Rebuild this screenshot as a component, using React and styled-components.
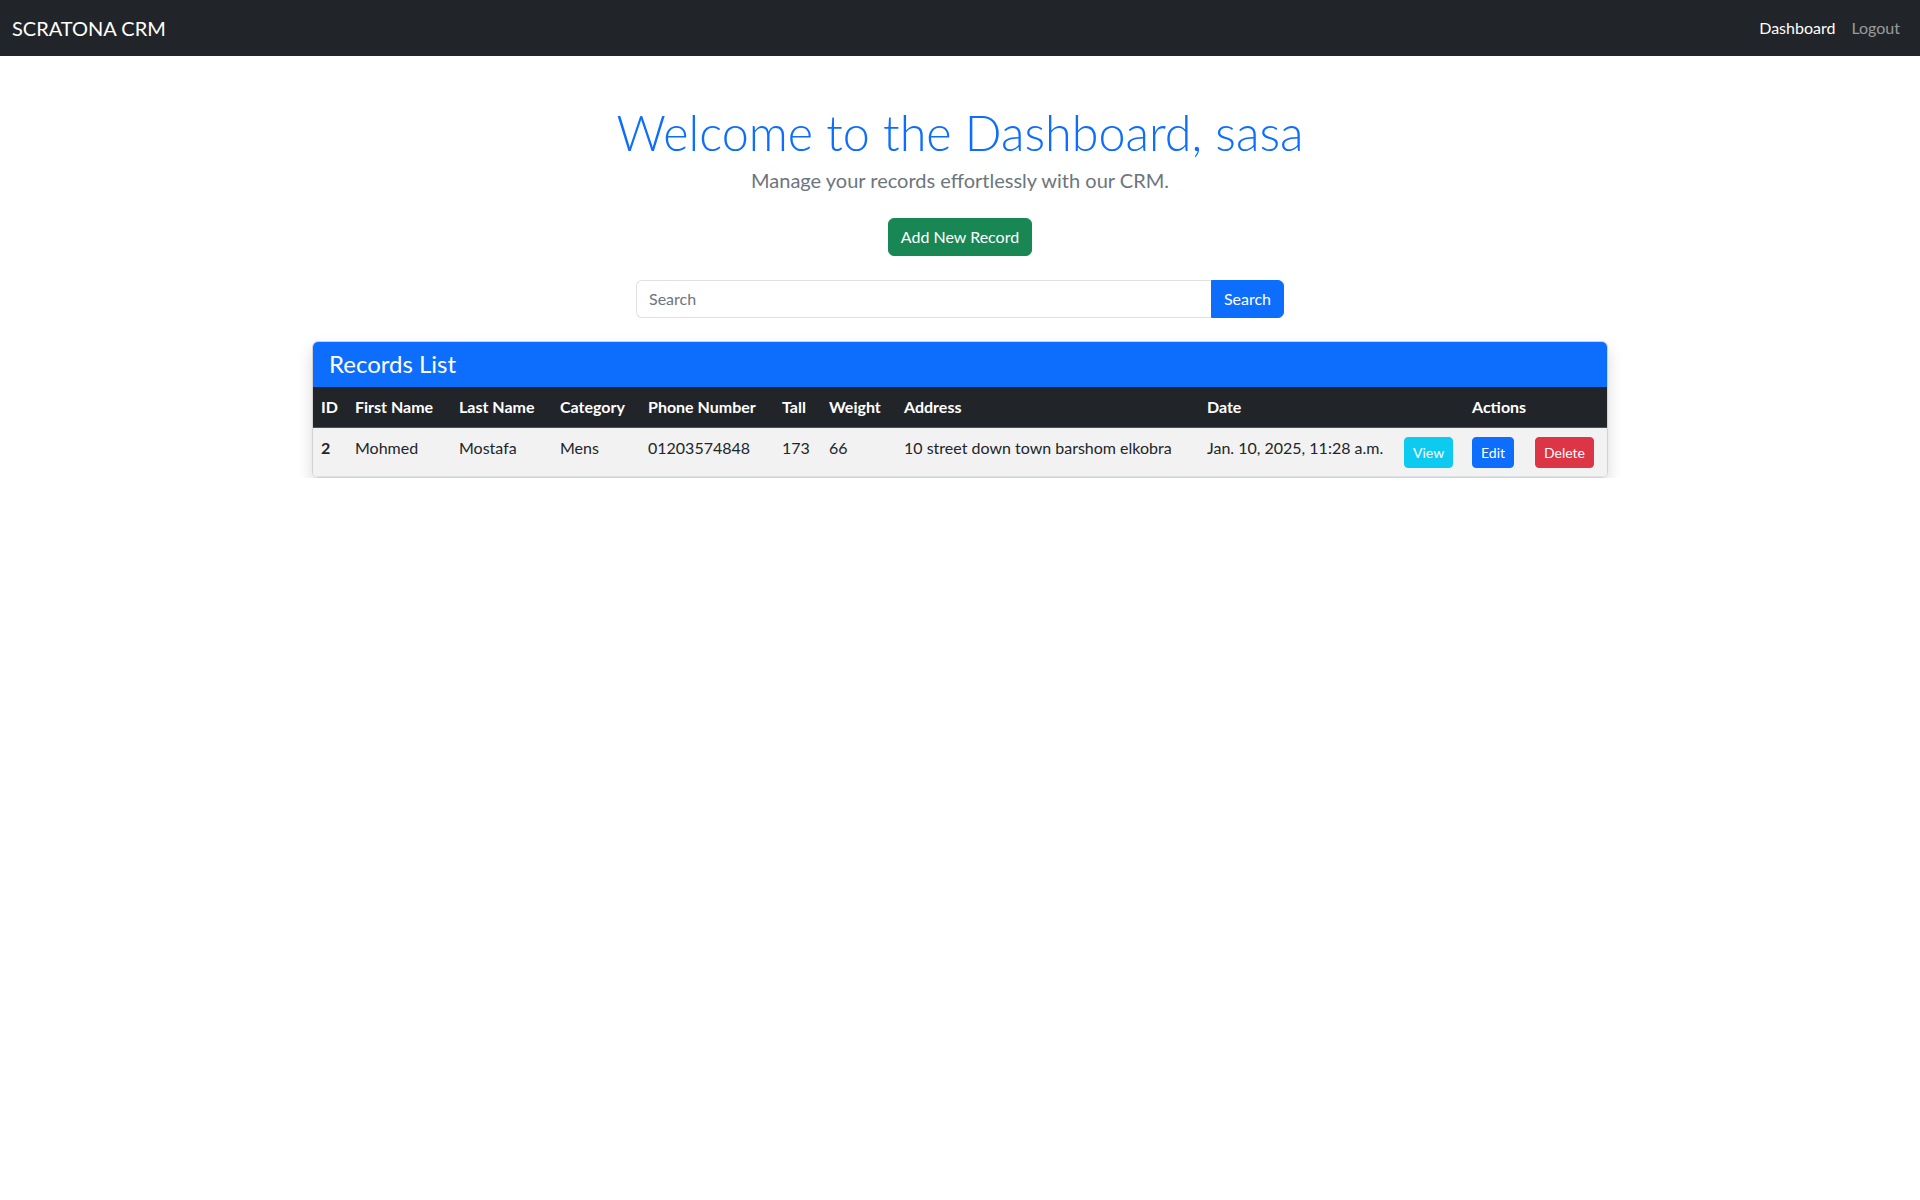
import React from "react";
import styled, { createGlobalStyle } from "styled-components";

const GlobalStyle = createGlobalStyle`
  * {
    box-sizing: border-box;
  }

  body {
    margin: 0;
    font-family: "Lato", "Open Sans", sans-serif;
    font-size: 16px;
    line-height: 1.5;
    color: #212529;
    background: #fff;
  }
`;

const colors = {
  primary: "#0d6efd",
  success: "#198754",
  info: "#0dcaf0",
  danger: "#dc3545",
  dark: "#212529",
  muted: "#6c757d",
};

// Navbar
const Navbar = styled.nav`
  display: flex;
  align-items: center;
  justify-content: space-between;
  height: 56px;
  padding: 8px 12px;
  background: ${colors.dark};
`;

const Brand = styled.a`
  font-size: 20px;
  line-height: 30px;
  padding: 5px 0;
  color: #fff;
  text-decoration: none;
`;

const NavList = styled.div`
  display: flex;
  align-items: center;
`;

const NavLink = styled.a`
  padding: 8px;
  font-size: 16px;
  color: ${(props) => (props.active ? "#fff" : "rgba(255, 255, 255, 0.55)")};
  text-decoration: none;
`;

// Page content
const Container = styled.main`
  max-width: 1320px;
  margin: 47px auto 0;
  padding: 0 12px;
  text-align: center;
`;

const Title = styled.h1`
  margin: 0 0 4px;
  font-size: 48.5px;
  font-weight: 300;
  line-height: 1.2;
  color: ${colors.primary};
`;

const Lead = styled.p`
  margin: 0 0 23px;
  font-size: 20px;
  font-weight: 400;
  color: ${colors.muted};
`;

const Button = styled.button`
  display: inline-block;
  vertical-align: ${(props) => (props.small ? "top" : "baseline")};
  margin-top: ${(props) => (props.small ? "1px" : "0")};
  font-family: inherit;
  font-size: ${(props) => (props.small ? "14px" : "16px")};
  line-height: 1.5;
  padding: ${(props) => (props.small ? "4px 8px" : "6px 12px")};
  border: 1px solid ${(props) => props.color};
  border-radius: ${(props) => (props.small ? "4px" : "6px")};
  background: ${(props) => props.color};
  color: #fff;
  cursor: pointer;
`;

const AddButton = styled(Button)`
  margin-bottom: 24px;
`;

const SearchForm = styled.form`
  display: flex;
  width: 648px;
  margin: 0 auto 23px;
`;

const SearchInput = styled.input`
  flex: 1;
  min-width: 0;
  font-family: inherit;
  font-size: 16px;
  line-height: 1.5;
  padding: 6px 12px;
  color: ${colors.dark};
  border: 1px solid #dee2e6;
  border-right: 0;
  border-radius: 6px 0 0 6px;
  outline: none;

  &::placeholder {
    color: ${colors.muted};
  }
`;

const SearchButton = styled(Button)`
  border-radius: 0 6px 6px 0;
`;

// Records card
const Card = styled.section`
  text-align: left;
  border: 1px solid rgba(0, 0, 0, 0.175);
  border-radius: 6px;
  box-shadow: 0 8px 16px rgba(0, 0, 0, 0.15);
  overflow: hidden;
`;

const CardHeader = styled.div`
  padding: 8px 16px;
  background: ${colors.primary};
`;

const CardTitle = styled.h4`
  margin: 0;
  font-size: 24px;
  font-weight: 400;
  line-height: 1.2;
  color: #fff;
`;

const Table = styled.table`
  width: 100%;
  border-collapse: collapse;
  table-layout: fixed;
`;

const HeadCell = styled.th`
  padding: 8px;
  text-align: left;
  font-weight: 700;
  color: #fff;
  background: ${colors.dark};
  border-bottom: 1px solid #4d5154;
  white-space: nowrap;
`;

const Cell = styled.td`
  padding: 8px;
  vertical-align: top;
  background: #f2f2f2;
  color: ${colors.dark};
  border-bottom: 1px solid #dee2e6;
  font-weight: ${(props) => (props.strong ? 700 : 400)};
  white-space: nowrap;
`;

const columns = [
  { label: "ID", width: 34 },
  { label: "First Name", width: 104 },
  { label: "Last Name", width: 101 },
  { label: "Category", width: 88 },
  { label: "Phone Number", width: 134 },
  { label: "Tall", width: 47 },
  { label: "Weight", width: 75 },
  { label: "Address", width: 303 },
  { label: "Date", width: 197 },
  { label: "", width: 68 },
  { label: "Actions", width: 63 },
  { label: "", width: 80 },
];

const records = [
  {
    id: 2,
    firstName: "Mohmed",
    lastName: "Mostafa",
    category: "Mens",
    phone: "01203574848",
    tall: 173,
    weight: 66,
    address: "10 street down town barshom elkobra",
    date: "Jan. 10, 2025, 11:28 a.m.",
  },
];

export default function App() {
  return (
    <>
      <GlobalStyle />
      <Navbar>
        <Brand href="#">SCRATONA CRM</Brand>
        <NavList>
          <NavLink href="#" active>
            Dashboard
          </NavLink>
          <NavLink href="#">Logout</NavLink>
        </NavList>
      </Navbar>

      <Container>
        <Title>Welcome to the Dashboard, sasa</Title>
        <Lead>Manage your records effortlessly with our CRM.</Lead>
        <AddButton color={colors.success}>Add New Record</AddButton>

        <SearchForm onSubmit={(e) => e.preventDefault()}>
          <SearchInput type="text" placeholder="Search" />
          <SearchButton color={colors.primary} type="submit">
            Search
          </SearchButton>
        </SearchForm>

        <Card>
          <CardHeader>
            <CardTitle>Records List</CardTitle>
          </CardHeader>
          <Table>
            <colgroup>
              {columns.map((col, i) => (
                <col key={i} style={{ width: col.width }} />
              ))}
            </colgroup>
            <thead>
              <tr>
                {columns.map((col, i) => (
                  <HeadCell key={i}>{col.label}</HeadCell>
                ))}
              </tr>
            </thead>
            <tbody>
              {records.map((r) => (
                <tr key={r.id}>
                  <Cell strong>{r.id}</Cell>
                  <Cell>{r.firstName}</Cell>
                  <Cell>{r.lastName}</Cell>
                  <Cell>{r.category}</Cell>
                  <Cell>{r.phone}</Cell>
                  <Cell>{r.tall}</Cell>
                  <Cell>{r.weight}</Cell>
                  <Cell>{r.address}</Cell>
                  <Cell>{r.date}</Cell>
                  <Cell>
                    <Button small color={colors.info}>View</Button>
                  </Cell>
                  <Cell>
                    <Button small color={colors.primary}>Edit</Button>
                  </Cell>
                  <Cell>
                    <Button small color={colors.danger}>Delete</Button>
                  </Cell>
                </tr>
              ))}
            </tbody>
          </Table>
        </Card>
      </Container>
    </>
  );
}
